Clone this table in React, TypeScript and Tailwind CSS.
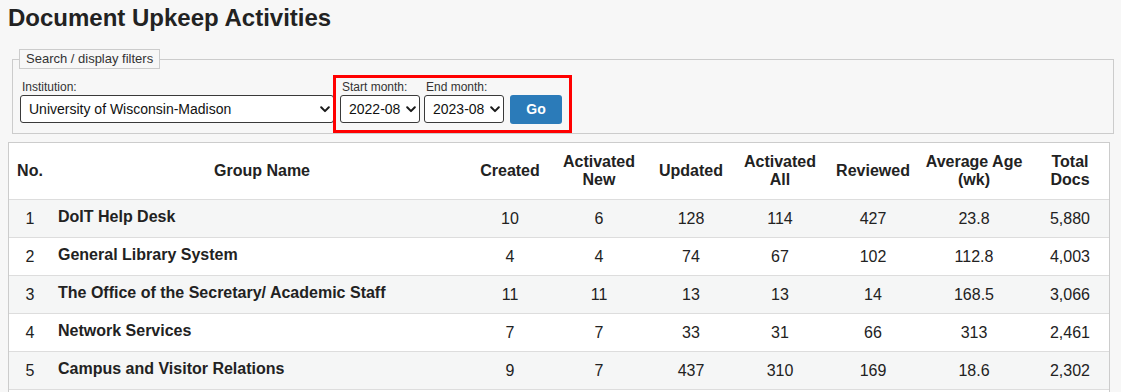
import React from "react";

const FONT = { fontFamily: '"Liberation Sans", Arial, sans-serif' };

function Chevron() {
  return (
    <svg width="10" height="7" viewBox="0 0 10 7" className="shrink-0">
      <path d="M1.2 1.3 L5 5.1 L8.8 1.3" fill="none" stroke="#1a1a1a" strokeWidth="2" strokeLinecap="round" strokeLinejoin="round" />
    </svg>
  );
}

function FakeSelect({ value, className }: { value: string; className: string }) {
  return (
    <div
      className={
        "flex h-[28px] items-center justify-between rounded-[3px] border border-[#3a3a3a] bg-white pl-[8px] pr-[3px] text-[14px] leading-[16px] text-[#111] " +
        className
      }
    >
      <span className="whitespace-nowrap">{value}</span>
      <Chevron />
    </div>
  );
}

type Row = {
  no: number;
  name: string;
  created: string;
  actNew: string;
  updated: string;
  actAll: string;
  reviewed: string;
  age: string;
  total: string;
};

const rows: Row[] = [
  { no: 1, name: "DoIT Help Desk", created: "10", actNew: "6", updated: "128", actAll: "114", reviewed: "427", age: "23.8", total: "5,880" },
  { no: 2, name: "General Library System", created: "4", actNew: "4", updated: "74", actAll: "67", reviewed: "102", age: "112.8", total: "4,003" },
  { no: 3, name: "The Office of the Secretary/ Academic Staff", created: "11", actNew: "11", updated: "13", actAll: "13", reviewed: "14", age: "168.5", total: "3,066" },
  { no: 4, name: "Network Services", created: "7", actNew: "7", updated: "33", actAll: "31", reviewed: "66", age: "313", total: "2,461" },
  { no: 5, name: "Campus and Visitor Relations", created: "9", actNew: "7", updated: "437", actAll: "310", reviewed: "169", age: "18.6", total: "2,302" },
];

export default function App() {
  return (
    <div className="min-h-screen bg-[#f7f7f7] px-[8px] pt-[4px] text-[#222]" style={FONT}>
      <h1 className="text-[24px] font-bold leading-[28px] text-[#222]">Document Upkeep Activities</h1>

      <fieldset className="ml-[4px] mr-[-1px] mt-[17px] border border-[#cccccc] px-[7px] pb-[3px] pt-[9px]">
        <legend className="ml-[-1px] border border-[#cccccc] px-[6px] py-[1px] text-[13px] leading-[16px] text-[#333]">
          Search / display filters
        </legend>
        <div className="flex items-start">
          <div className="flex flex-col pt-[2px]">
            <label className="pl-[2px] text-[12px] leading-[14px] text-[#333]">Institution:</label>
            <FakeSelect value="University of Wisconsin-Madison" className="mt-[1px] w-[314px]" />
          </div>
          <div className="ml-[2px] flex items-start gap-[4px] pb-[6px] pl-[4px] pr-[7px] pt-[2px] outline outline-[3px] outline-[#ff0000]">
            <div className="flex flex-col">
              <label className="pl-[2px] text-[12px] leading-[14px] text-[#333]">Start month:</label>
              <FakeSelect value="2022-08" className="mt-[1px] w-[80px]" />
            </div>
            <div className="flex flex-col">
              <label className="pl-[2px] text-[12px] leading-[14px] text-[#333]">End month:</label>
              <FakeSelect value="2023-08" className="mt-[1px] w-[80px]" />
            </div>
            <button className="ml-[2px] mt-[15px] flex h-[29px] w-[52px] items-center justify-center rounded-[3px] bg-[#2b7bb9] text-[14px] font-bold text-white">
              Go
            </button>
          </div>
        </div>
      </fieldset>

      <table className="mt-[8px] w-[1102px] table-fixed border-separate border-spacing-0 border border-[#cccccc] bg-white text-[16px] text-[#222]">
        <colgroup>
          <col className="w-[42px]" />
          <col className="w-[422px]" />
          <col className="w-[74px]" />
          <col className="w-[104px]" />
          <col className="w-[80px]" />
          <col className="w-[98px]" />
          <col className="w-[88px]" />
          <col className="w-[114px]" />
          <col className="w-[78px]" />
        </colgroup>
        <thead>
          <tr className="h-[56px]">
            <th className="text-center font-bold leading-[18px]">No.</th>
            <th className="text-center font-bold leading-[18px]">Group Name</th>
            <th className="text-center font-bold leading-[18px]">Created</th>
            <th className="text-center font-bold leading-[18px]">Activated<br />New</th>
            <th className="text-center font-bold leading-[18px]">Updated</th>
            <th className="text-center font-bold leading-[18px]">Activated<br />All</th>
            <th className="text-center font-bold leading-[18px]">Reviewed</th>
            <th className="text-center font-bold leading-[18px]">Average Age<br />(wk)</th>
            <th className="text-center font-bold leading-[18px]">Total<br />Docs</th>
          </tr>
        </thead>
        <tbody>
          {rows.map((r, i) => (
            <tr key={r.no} className={"h-[38px] " + (i % 2 === 0 ? "bg-[#f5f6f6]" : "bg-white")}>
              <td className="border-t border-[#dddddd] text-center">{r.no}</td>
              <td className="border-t border-[#dddddd] pb-[4px] pl-[7px] text-left font-bold">{r.name}</td>
              <td className="border-t border-[#dddddd] text-center">{r.created}</td>
              <td className="border-t border-[#dddddd] text-center">{r.actNew}</td>
              <td className="border-t border-[#dddddd] text-center">{r.updated}</td>
              <td className="border-t border-[#dddddd] text-center">{r.actAll}</td>
              <td className="border-t border-[#dddddd] text-center">{r.reviewed}</td>
              <td className="border-t border-[#dddddd] text-center">{r.age}</td>
              <td className="border-t border-[#dddddd] text-center">{r.total}</td>
            </tr>
          ))}
          <tr className="h-[38px] bg-white">
            <td className="border-t border-[#dddddd]" colSpan={9}></td>
          </tr>
        </tbody>
      </table>
    </div>
  );
}
